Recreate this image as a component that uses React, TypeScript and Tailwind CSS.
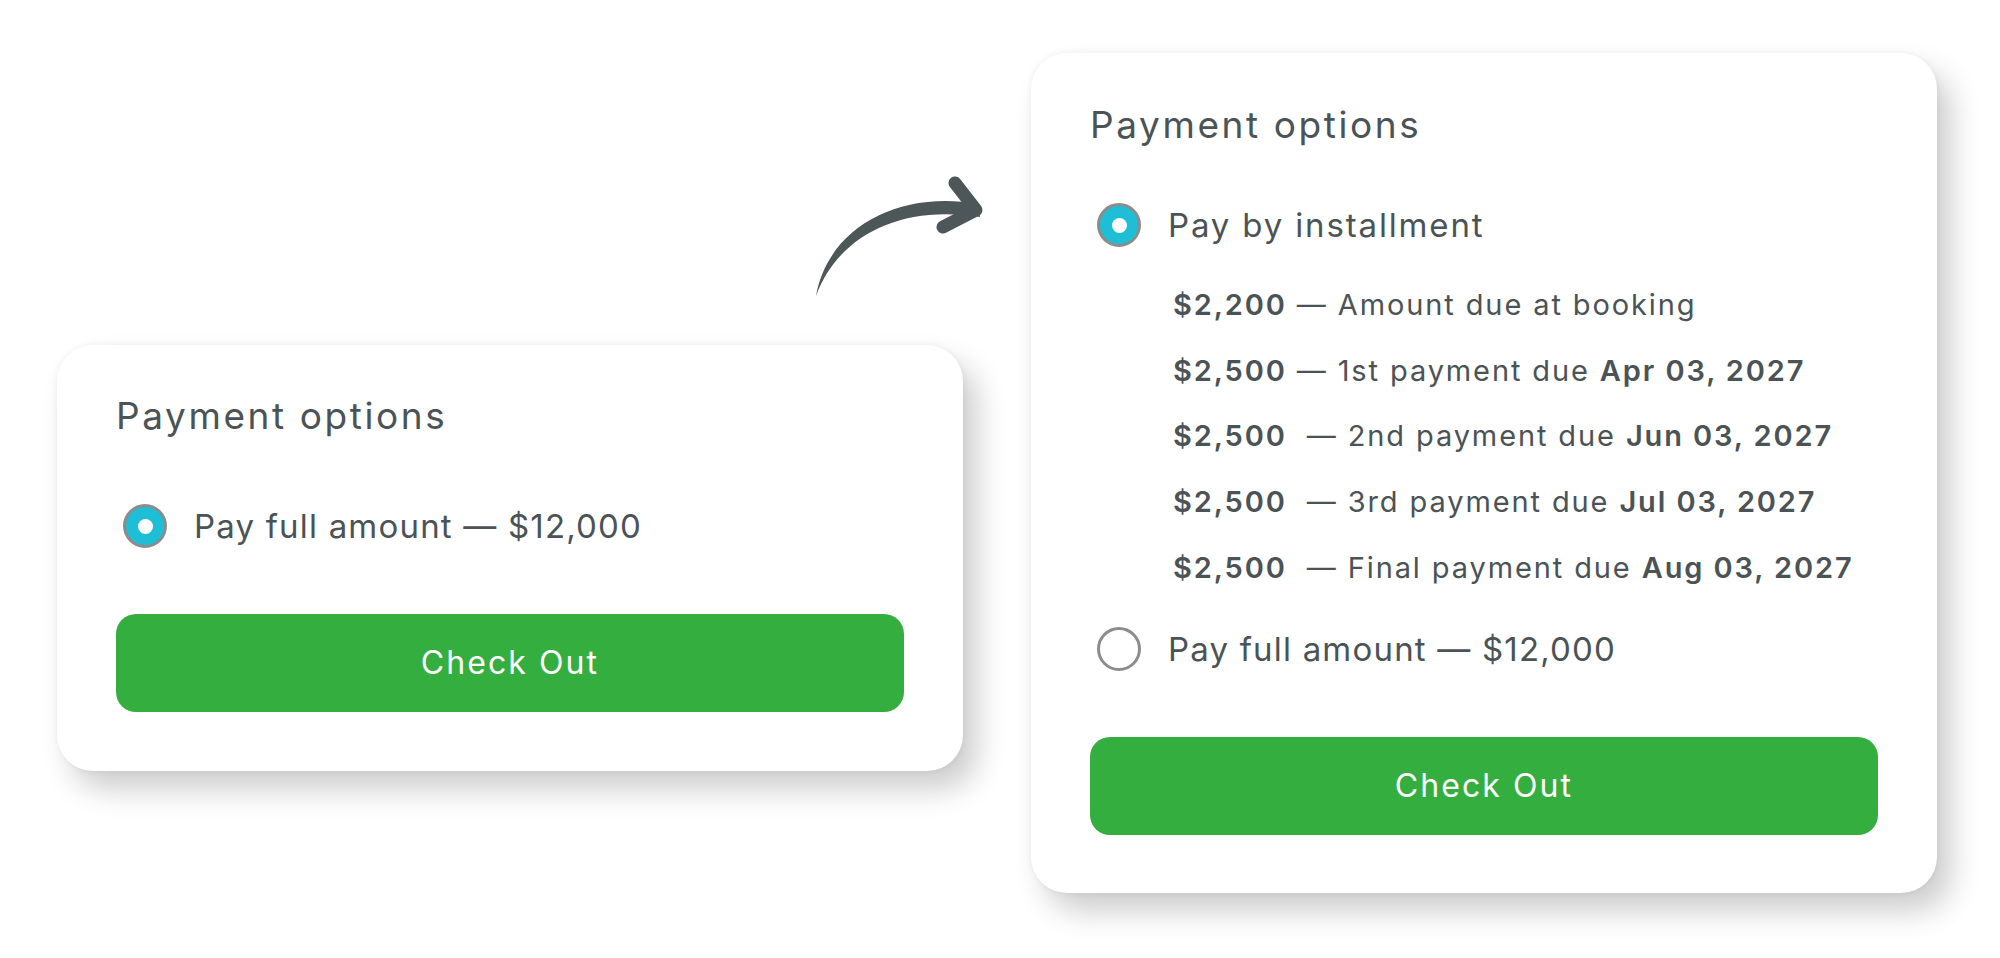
import React from 'react'

const font = "font-['Inter','Noto_Sans',sans-serif]"

interface Installment {
  amount: string
  label: string
  date?: string
  wide?: boolean
}

const installments: Installment[] = [
  { amount: '$2,200', label: 'Amount due at booking' },
  { amount: '$2,500', label: '1st payment due', date: 'Apr 03, 2027' },
  { amount: '$2,500', label: '2nd payment due', date: 'Jun 03, 2027', wide: true },
  { amount: '$2,500', label: '3rd payment due', date: 'Jul 03, 2027', wide: true },
  { amount: '$2,500', label: 'Final payment due', date: 'Aug 03, 2027', wide: true },
]

function Radio({ checked }: { checked: boolean }) {
  return (
    <span
      className={
        checked
          ? 'ml-[7px] flex h-[44px] w-[44px] shrink-0 items-center justify-center rounded-full border-[3px] border-[#8c8c8c] bg-[#1ebfd6]'
          : 'ml-[7px] flex h-[44px] w-[44px] shrink-0 items-center justify-center rounded-full border-[3px] border-[#8c8c8c] bg-white'
      }
    >
      {checked && <span className="h-[15px] w-[15px] rounded-full bg-white" />}
    </span>
  )
}

function Option({ checked, tight, children }: { checked: boolean; tight?: boolean; children: React.ReactNode }) {
  return (
    <div className="flex h-[44px] items-center gap-[27px]">
      <Radio checked={checked} />
      <span
        className={
          tight
            ? 'text-[33px] leading-[44px] tracking-[0.036em] text-[#4b5356]'
            : 'text-[33px] leading-[44px] tracking-[0.056em] text-[#4b5356]'
        }
      >
        {children}
      </span>
    </div>
  )
}

function CheckOut() {
  return (
    <button className="flex h-[98px] w-full items-center justify-center rounded-[20px] bg-[#35ae40] text-[32px] tracking-[0.065em] text-white">
      Check Out
    </button>
  )
}

function Card({ children, className }: { children: React.ReactNode; className?: string }) {
  return (
    <div
      className={`w-[906px] rounded-[36px] bg-white px-[59px] shadow-[0_0_6px_rgba(0,0,0,0.06),14px_18px_30px_rgba(0,0,0,0.2)] ${className ?? ''}`}
    >
      {children}
    </div>
  )
}

function Arrow() {
  return (
    <svg width="200" height="140" viewBox="0 0 200 140" className="ml-[743px] mt-[117px] block shrink-0" fill="#4d5658">
      <path d="M16 126 C 28 58 98 20 178 34 L 180 47 C 100 34 38 66 16 126 Z" />
      <path d="M155 13 L 176 40 L 143 57" fill="none" stroke="#4d5658" strokeWidth="13" strokeLinecap="round" strokeLinejoin="round" />
    </svg>
  )
}

export default function App() {
  return (
    <div className={`flex min-h-screen w-full items-start gap-[68px] bg-white pl-[57px] pt-[53px] ${font}`}>
      {/* Before: single option */}
      <div className="flex w-[906px] shrink-0 flex-col">
        <Arrow />
        <Card className="mt-[35px] pb-[59px] pt-[49px]">
          <h2 className="text-[37px] leading-[44px] tracking-[0.07em] text-[#4b5356]">Payment options</h2>
          <div className="mt-[66px]">
            <Option checked tight>Pay full amount — $12,000</Option>
          </div>
          <div className="mt-[66px]">
            <CheckOut />
          </div>
        </Card>
      </div>

      {/* After: installments */}
      <Card className="shrink-0 pb-[58px] pt-[50px]">
        <h2 className="text-[37px] leading-[44px] tracking-[0.07em] text-[#4b5356]">Payment options</h2>
        <div className="mt-[56px]">
          <Option checked>Pay by installment</Option>
        </div>
        <ul className="mt-[25px] pl-[83px]">
          {installments.map((it, i) => (
            <li key={i} className="text-[29px] leading-[65.7px] tracking-[0.065em] text-[#4b5356]">
              <span className="font-semibold">{it.amount}</span>
              {it.wide ? '\u00a0 — ' : ' — '}
              {it.label}
              {it.date && (
                <>
                  {' '}
                  <span className="font-semibold">{it.date}</span>
                </>
              )}
            </li>
          ))}
        </ul>
        <div className="mt-[26px]">
          <Option checked={false} tight>Pay full amount — $12,000</Option>
        </div>
        <div className="mt-[66px]">
          <CheckOut />
        </div>
      </Card>
    </div>
  )
}
